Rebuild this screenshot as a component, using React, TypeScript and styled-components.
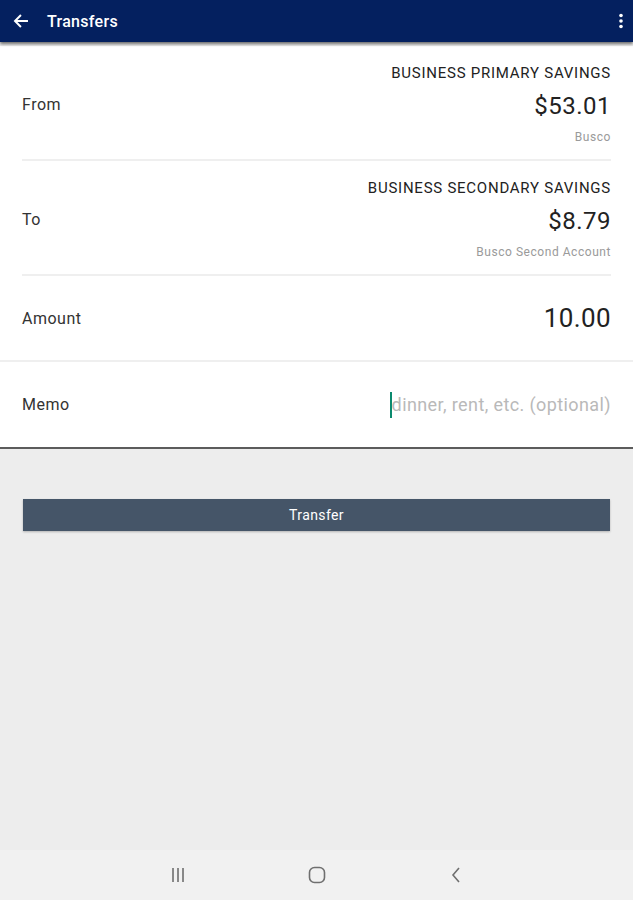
import React from "react";
import styled, { createGlobalStyle } from "styled-components";

const GlobalStyle = createGlobalStyle`
  html, body {
    margin: 0;
    padding: 0;
    background: #ededed;
    font-family: Roboto, "Liberation Sans", sans-serif;
  }
`;

const Screen = styled.div`
  width: 633px;
  height: 900px;
  display: flex;
  flex-direction: column;
  background: #ededed;
  overflow: hidden;
`;

const TopBar = styled.header`
  height: 42px;
  flex-shrink: 0;
  background: #04205f;
  display: flex;
  align-items: center;
  padding: 0 10px 0 12px;
  color: #ffffff;
  box-shadow: 0 2px 3px rgba(0, 0, 0, 0.55);
  position: relative;
  z-index: 2;
`;

const Title = styled.h1`
  flex: 1;
  margin: 0 0 0 17px;
  font-size: 16px;
  font-weight: 500;
  letter-spacing: 0.3px;
`;

const Card = styled.section`
  background: #ffffff;
  border-bottom: 2px solid #5c5c5c;
  margin-top: 4px;
`;

const AccountRow = styled.div`
  margin: 0 22px;
  display: flex;
  align-items: center;
  justify-content: space-between;
  padding: 18px 0 15px;
  border-bottom: 2px solid #efefef;
`;

const FieldRow = styled.div<{ $height: number; $last?: boolean }>`
  height: ${(p) => p.$height}px;
  padding: 0 22px;
  display: flex;
  align-items: center;
  justify-content: space-between;
  border-bottom: ${(p) => (p.$last ? "none" : "2px solid #efefef")};
`;

const Label = styled.span`
  font-size: 16px;
  letter-spacing: 0.5px;
  color: #333333;
`;

const AccountInfo = styled.div`
  display: flex;
  flex-direction: column;
  align-items: flex-end;
`;

const AccountName = styled.div`
  font-size: 15px;
  line-height: 18px;
  letter-spacing: 0.75px;
  color: #222222;
`;

const Balance = styled.div`
  font-size: 24px;
  line-height: 28px;
  letter-spacing: 0.5px;
  color: #222222;
  margin-top: 10px;
`;

const Nickname = styled.div`
  font-size: 12px;
  line-height: 14px;
  letter-spacing: 0.55px;
  color: #9a9a9a;
  margin-top: 10px;
`;

const AmountValue = styled.div`
  font-size: 26px;
  letter-spacing: 0.4px;
  color: #222222;
`;

const MemoInput = styled.div`
  display: flex;
  align-items: center;
  font-size: 18px;
  letter-spacing: 0.4px;
  color: #b9b9b9;
`;

const Caret = styled.span`
  display: inline-block;
  width: 2px;
  height: 26px;
  background: #0b8a6e;
`;

const ButtonArea = styled.div`
  flex: 1;
  padding: 50px 23px 0;
`;

const TransferButton = styled.button`
  width: 100%;
  height: 32px;
  border: none;
  background: #455568;
  color: #ffffff;
  font-family: Roboto, "Liberation Sans", sans-serif;
  font-size: 14px;
  letter-spacing: 0.4px;
  box-shadow: 0 1px 2px rgba(0, 0, 0, 0.25);
  cursor: pointer;
`;

const NavBar = styled.nav`
  height: 50px;
  flex-shrink: 0;
  background: #f1f1f1;
  display: flex;
  align-items: center;
  justify-content: center;
  gap: 119px;
  color: #6f6f6f;
`;

const NavIcon = styled.svg`
  width: 20px;
  height: 20px;
`;

export default function App() {
  return (
    <Screen>
      <GlobalStyle />
      <TopBar>
        <svg width="18" height="18" viewBox="0 0 24 24" fill="none" stroke="#fff" strokeWidth="2.6" strokeLinecap="square">
          <path d="M20 12H5M11 5l-7 7 7 7" />
        </svg>
        <Title>Transfers</Title>
        <svg width="4" height="16" viewBox="0 0 4 16" fill="#fff">
          <circle cx="2" cy="2.5" r="1.8" />
          <circle cx="2" cy="8" r="1.8" />
          <circle cx="2" cy="13.5" r="1.8" />
        </svg>
      </TopBar>

      <Card>
        <AccountRow>
          <Label>From</Label>
          <AccountInfo>
            <AccountName>BUSINESS PRIMARY SAVINGS</AccountName>
            <Balance>$53.01</Balance>
            <Nickname>Busco</Nickname>
          </AccountInfo>
        </AccountRow>
        <AccountRow>
          <Label>To</Label>
          <AccountInfo>
            <AccountName>BUSINESS SECONDARY SAVINGS</AccountName>
            <Balance>$8.79</Balance>
            <Nickname>Busco Second Account</Nickname>
          </AccountInfo>
        </AccountRow>
        <FieldRow $height={84}>
          <Label>Amount</Label>
          <AmountValue>10.00</AmountValue>
        </FieldRow>
        <FieldRow $height={85} $last>
          <Label>Memo</Label>
          <MemoInput>
            <Caret />
            dinner, rent, etc. (optional)
          </MemoInput>
        </FieldRow>
      </Card>

      <ButtonArea>
        <TransferButton>Transfer</TransferButton>
      </ButtonArea>

      <NavBar>
        <NavIcon viewBox="0 0 20 20" fill="none" stroke="currentColor" strokeWidth="1.6">
          <path d="M5 3v14M10 3v14M15 3v14" />
        </NavIcon>
        <NavIcon viewBox="0 0 20 20" fill="none" stroke="currentColor" strokeWidth="1.6">
          <rect x="2.5" y="2.5" width="15" height="15" rx="5" />
        </NavIcon>
        <NavIcon viewBox="0 0 20 20" fill="none" stroke="currentColor" strokeWidth="1.6">
          <path d="M13 3l-6 7 6 7" />
        </NavIcon>
      </NavBar>
    </Screen>
  );
}
